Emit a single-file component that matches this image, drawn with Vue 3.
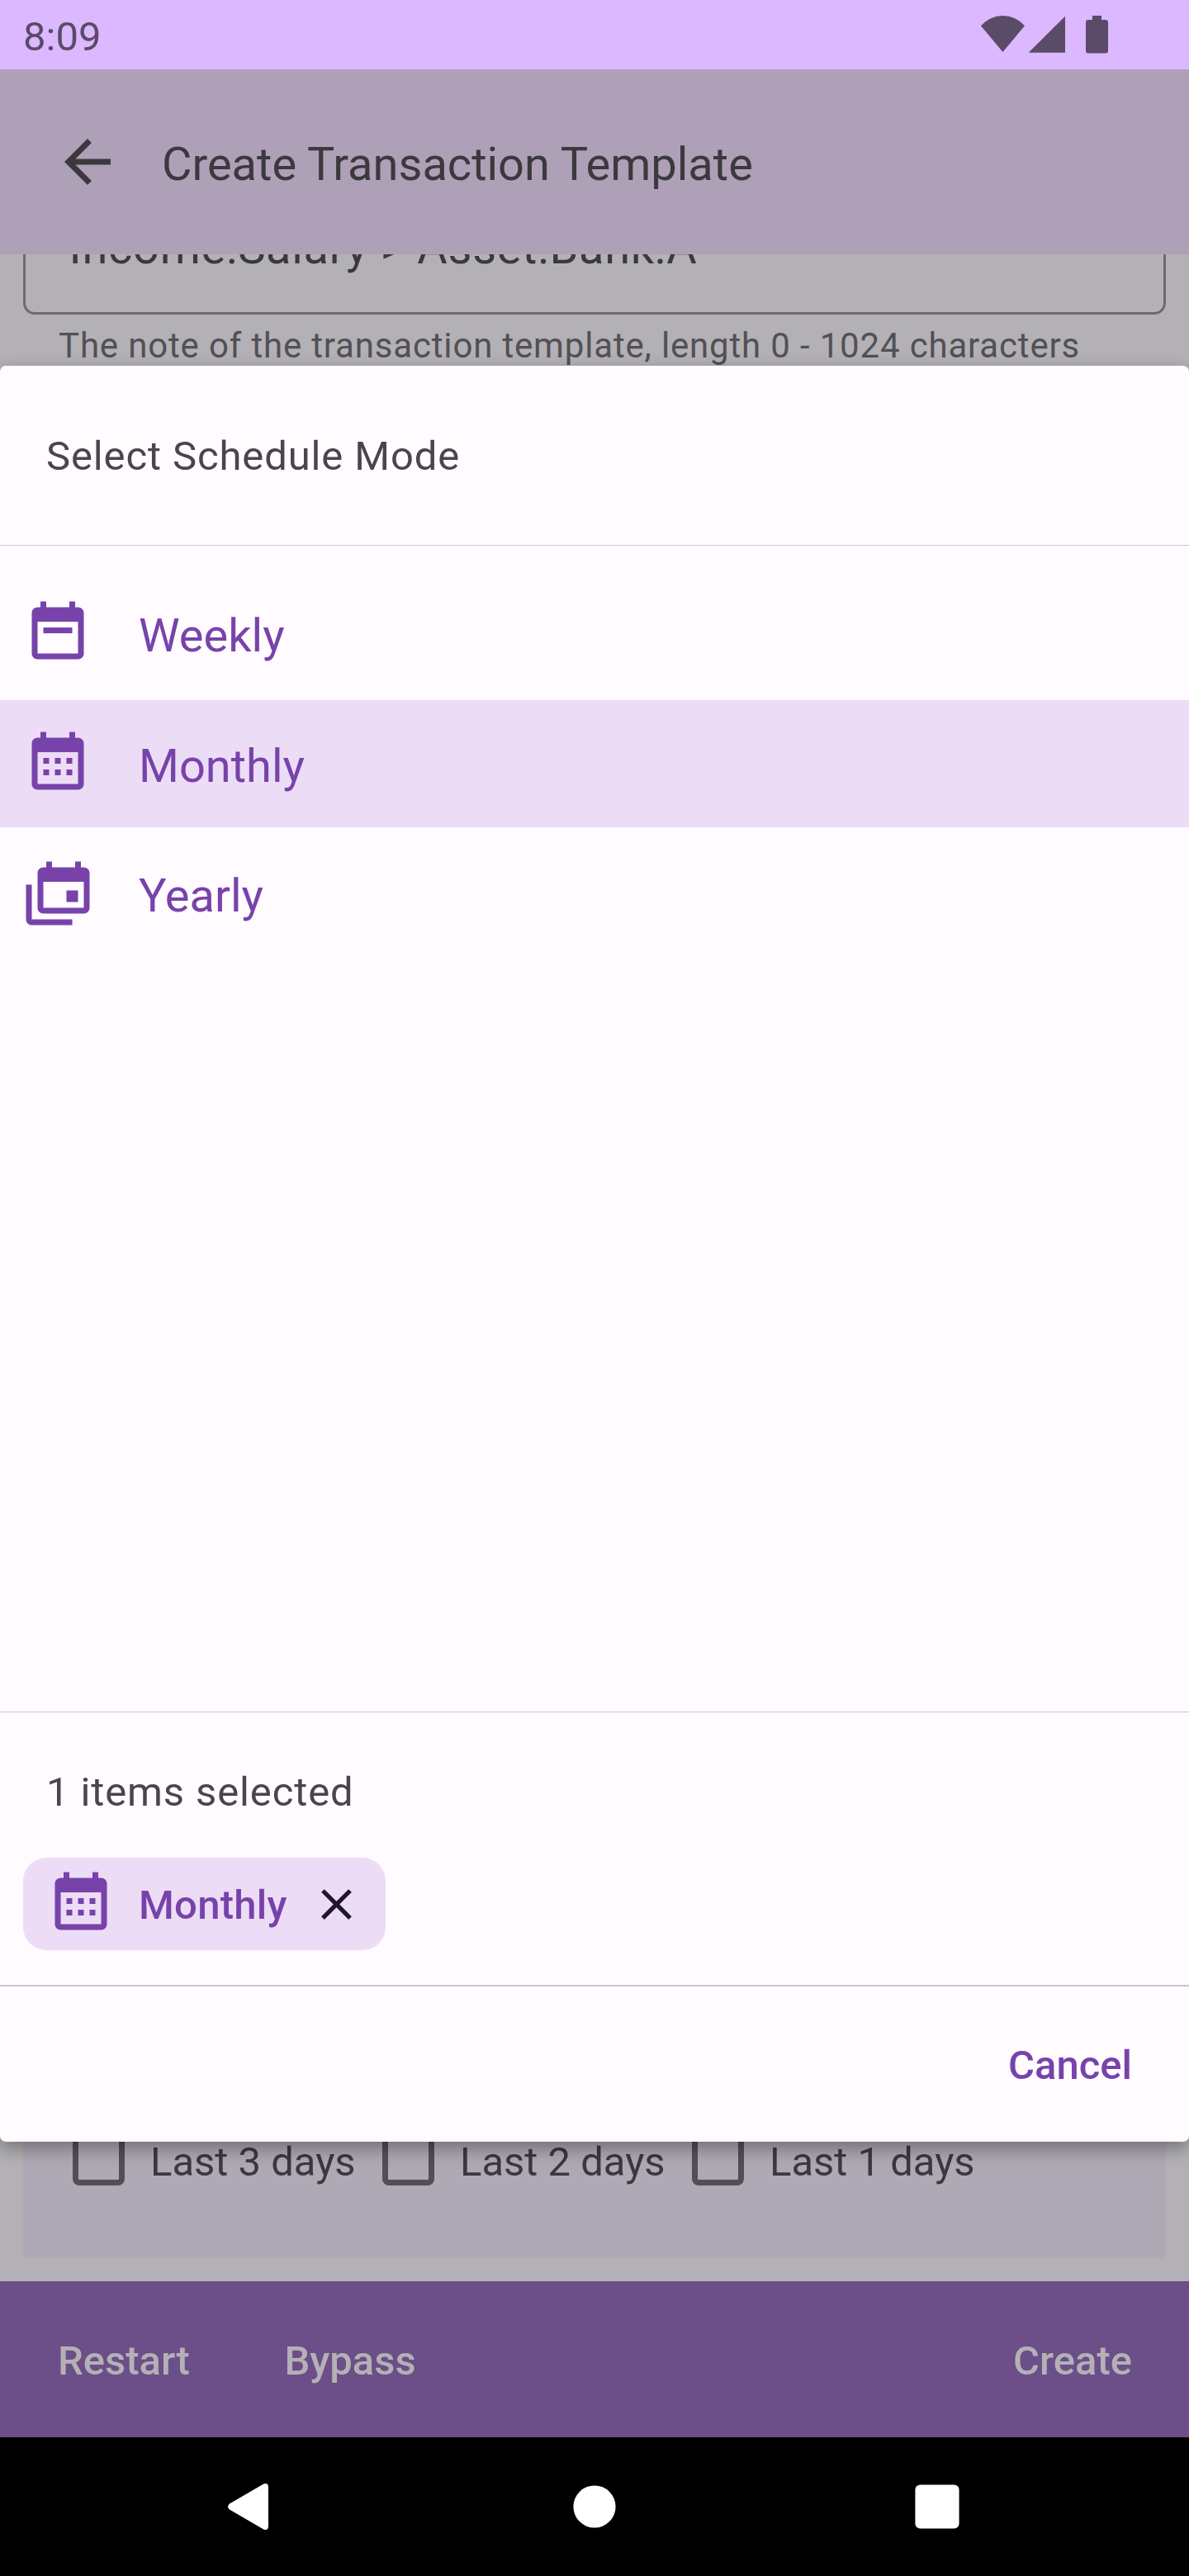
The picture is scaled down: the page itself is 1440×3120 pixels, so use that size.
<script setup>
const modes = [
  { name: 'Weekly', icon: 'M19 3h-1V1h-2v2H8V1H6v2H5c-1.1 0-2 .9-2 2v14c0 1.1.9 2 2 2h14c1.1 0 2-.9 2-2V5c0-1.1-.9-2-2-2zm0 16H5V8h14v11zM7 10h10v2H7z' },
  { name: 'Monthly', icon: 'M9 10H7v2h2v-2zm4 0h-2v2h2v-2zm4 0h-2v2h2v-2zM9 14H7v2h2v-2zm4 0h-2v2h2v-2zm4 0h-2v2h2v-2zM19 3h-1V1h-2v2H8V1H6v2H5c-1.1 0-2 .9-2 2v14c0 1.1.9 2 2 2h14c1.1 0 2-.9 2-2V5c0-1.1-.9-2-2-2zm0 16H5V8h14v11z' },
  { name: 'Yearly', icon: 'M21 17V8H7v9h14zm0-14c1.1 0 2 .9 2 2v12c0 1.1-.9 2-2 2H7c-1.1 0-2-.9-2-2V5c0-1.1.9-2 2-2h1V1h2v2h8V1h2v2h1zM3 21h14v2H3c-1.1 0-2-.9-2-2V9h2v12zm16-6h-4v-4h4v4z' },
]
const selected = modes[1]
const reminders = ['Last 3 days', 'Last 2 days', 'Last 1 days']
</script>

<template>
  <div class="screen">
    <header class="status">
      <span class="clock">8:09</span>
      <svg class="status-icons" viewBox="0 0 160 50" width="160" height="50">
        <path d="M3 14.300A34.700 34.700 0 0 1 56 14.300L29.500 46z" />
        <path d="M105 2.700v44H60.700z" />
        <path d="M138 2h11v5h5q3 0 3 3v34.600q0 3-3 3h-21q-3 0-3-3V10q0-3 3-3h5z" />
      </svg>
    </header>

    <div class="appbar">
      <svg class="back" viewBox="0 0 24 24"><path d="M20 11H7.830l5.590-5.590L12 4l-8 8 8 8 1.410-1.410L7.830 13H20v-2z" /></svg>
      <span class="title">Create Transaction Template</span>
    </div>

    <main class="content">
      <div class="note">
        <div class="field">Income:Salary &gt; Asset:Bank:A</div>
        <div class="helper">The note of the transaction template, length 0 - 1024 characters</div>
      </div>
      <div class="card">
        <label v-for="r in reminders" :key="r" class="check">
          <span class="box"></span>
          <span class="check-text">{{ r }}</span>
        </label>
      </div>
    </main>

    <footer class="bottom">
      <span class="restart">Restart</span>
      <span class="bypass">Bypass</span>
      <span class="create">Create</span>
    </footer>

    <nav class="nav">
      <svg viewBox="0 0 60 60"><path d="M43.800 2.800Q49.500 0 50 6V54Q49.500 60 43.800 57.200L3 33.500Q-1 30 3 26.500z" /></svg>
      <svg viewBox="0 0 60 60"><circle cx="30" cy="30" r="25.600" /></svg>
      <svg viewBox="0 0 60 60"><rect x="3.400" y="3.400" width="53.200" height="53.200" rx="6" /></svg>
    </nav>

    <section class="sheet">
      <h1 class="heading"><span>Select Schedule Mode</span></h1>
      <ul class="list">
        <li v-for="m in modes" :key="m.name" :class="['row', { active: m === selected }]">
          <svg class="icon" viewBox="0 0 24 24"><path :d="m.icon" /></svg>
          <span class="row-text">{{ m.name }}</span>
        </li>
      </ul>
      <div class="selection">
        <p class="count">1 items selected</p>
        <div class="chip">
          <svg class="icon" viewBox="0 0 24 24"><path :d="selected.icon" /></svg>
          <span class="chip-text">{{ selected.name }}</span>
          <svg class="close" viewBox="0 0 24 24"><path d="M19 6.410L17.590 5 12 10.590 6.410 5 5 6.410 10.590 12 5 17.590 6.410 19 12 13.410 17.590 19 19 17.590 13.410 12z" /></svg>
        </div>
      </div>
      <div class="actions"><span>Cancel</span></div>
    </section>
  </div>
</template>

<style>
body { margin: 0; }
</style>

<style scoped>
.screen {
  position: relative;
  display: flex;
  flex-direction: column;
  width: 1440px;
  height: 3120px;
  overflow: hidden;
  background: #b3b1b5;
  color: #3b393e;
  font: 400 49px/60px Roboto, sans-serif;
  white-space: nowrap;
}
.status {
  display: flex;
  justify-content: space-between;
  flex: none;
  height: 84px;
  padding: 0 95px 0 28px;
  box-sizing: border-box;
  background: #dbb8ff;
  color: #5a4b68;
}
.clock { padding-top: 14.500px; }
.status-icons { margin-top: 17px; fill: #5a4b68; }
.appbar {
  display: flex;
  align-items: center;
  flex: none;
  height: 224px;
  padding-left: 64px;
  background: #aea0b7;
}
.back { width: 84px; height: 84px; fill: #3b393e; }
.title { margin-left: 48px; padding-top: 6px; font-size: 56px; }
.content {
  display: flex;
  flex-direction: column;
  justify-content: space-between;
  flex: 1;
  overflow: hidden;
  padding: 0 28px 28px;
}
.note { margin-top: -60px; }
.field {
  height: 133px;
  box-sizing: border-box;
  padding: 22px 52.500px 0;
  border: 3.500px solid #6d6b70;
  border-top: 0;
  border-radius: 0 0 14px 14px;
  font-size: 56px;
  letter-spacing: .700px;
}
.helper {
  padding: 7.500px 43px 0;
  color: #525056;
  font-size: 42px;
  letter-spacing: .830px;
}
.card {
  display: flex;
  height: 420px;
  box-sizing: border-box;
  padding: 269px 59.500px 0;
  border-radius: 7px;
  background: #aea9b4;
}
.check { display: flex; width: 375px; }
.box {
  width: 63px;
  height: 63px;
  box-sizing: border-box;
  border: 7px solid #525056;
  border-radius: 8px;
}
.check-text { margin-left: 31.500px; padding-top: 4.500px; }
.bottom {
  display: flex;
  align-items: center;
  flex: none;
  height: 189px;
  box-sizing: border-box;
  padding: 5px 69px 0 70px;
  background: #6c4e88;
  color: #b3b1b5;
  font-weight: 500;
}
.bypass { margin-left: 114.500px; }
.create { margin-left: auto; }
.nav {
  display: flex;
  justify-content: center;
  align-items: center;
  gap: 355px;
  flex: none;
  height: 168px;
  background: #000;
}
.nav svg { width: 60px; height: 60px; fill: #fff; }
.sheet {
  position: absolute;
  top: 443px;
  left: 0;
  display: flex;
  flex-direction: column;
  width: 1440px;
  height: 2151px;
  border-radius: 7px;
  background: #fffbff;
  box-shadow: 0 8px 22px rgba(0, 0, 0, .36);
  color: #49454e;
}
.heading {
  display: flex;
  align-items: center;
  flex: none;
  height: 218px;
  margin: 0;
  padding: 2px 56px 0;
  box-sizing: border-box;
  border-bottom: 1px solid #cac5cd;
  font: inherit;
  letter-spacing: .875px;
}
.list {
  display: flex;
  flex-direction: column;
  gap: 3.500px;
  flex: 1;
  margin: 0;
  padding: 29px 0 0;
  list-style: none;
}
.row {
  display: flex;
  align-items: center;
  height: 154px;
  padding-left: 28px;
  color: #7743aa;
  font-size: 56px;
}
.active { background: #ecdcf6; }
.icon { width: 84px; height: 84px; fill: #7743aa; }
.row-text { margin-left: 56px; padding-top: 6px; }
.selection {
  height: 333px;
  box-sizing: border-box;
  padding: 67px 28px 0;
  border-top: 1px solid #cac5cd;
  border-bottom: 2px solid #cac5cd;
  flex: none;
}
.count { margin: 0 28px 49px; letter-spacing: .875px; }
.chip {
  display: flex;
  align-items: center;
  width: 439px;
  height: 112px;
  box-sizing: border-box;
  padding-left: 28px;
  border-radius: 28px;
  background: #ecdcf6;
}
.chip-text {
  width: 208px;
  margin-left: 28px;
  padding-top: 4px;
  color: #7743aa;
  font-weight: 500;
  letter-spacing: .250px;
}
.close { width: 63px; height: 63px; fill: #201829; }
.actions {
  display: flex;
  align-items: center;
  justify-content: flex-end;
  flex: none;
  height: 188px;
  padding: 4px 69px 0;
  box-sizing: border-box;
  color: #7743aa;
  font-weight: 500;
}
</style>
